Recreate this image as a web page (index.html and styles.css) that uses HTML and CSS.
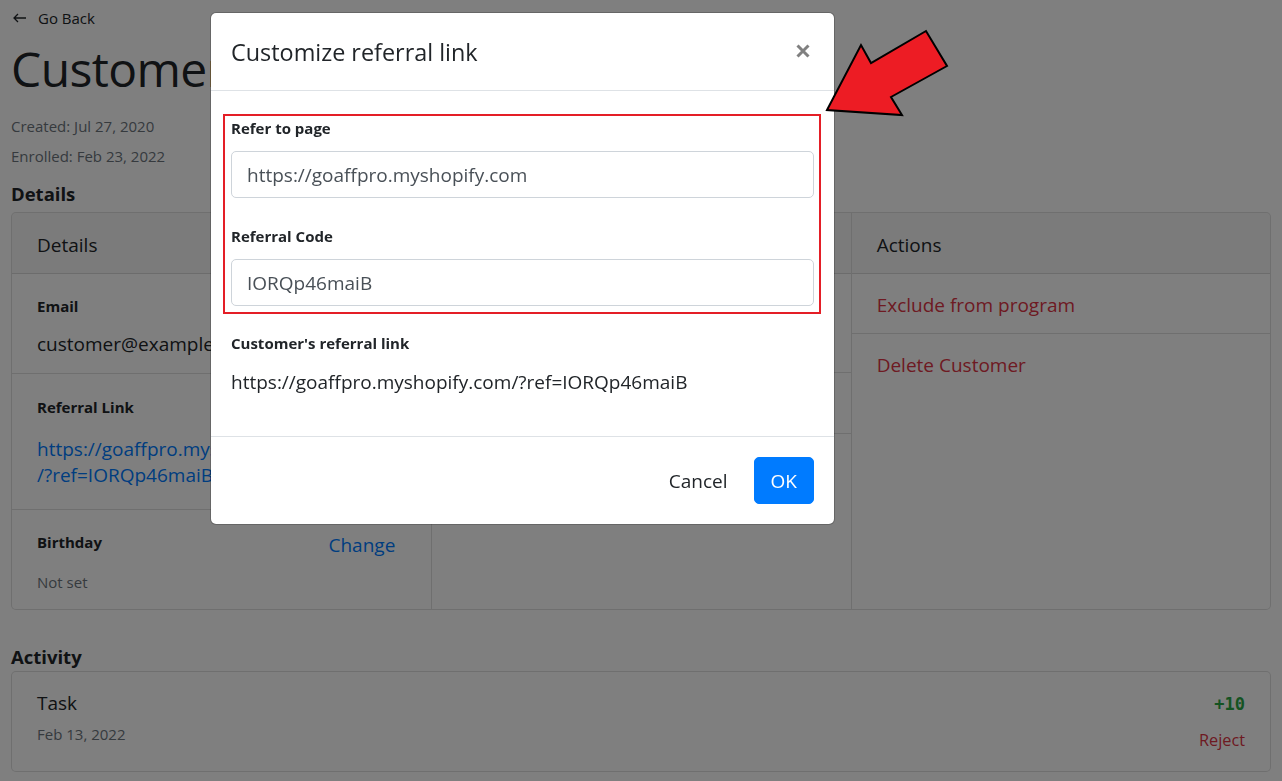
FILE: index.html
```html
<!DOCTYPE html>
<html lang="en">
<head>
<meta charset="utf-8">
<title>Customer</title>
<link rel="stylesheet" href="styles.css">
</head>
<body>
<div class="page">
  <a class="back" href="#">
    <svg class="back-icon" width="14" height="10" viewBox="0 0 14 10"><path d="M1 5 H13 M5 1 L1 5 L5 9" fill="none" stroke="#212529" stroke-width="1.3"/></svg>
    <span>Go Back</span>
  </a>
  <h1 class="title">Customer</h1>
  <div class="meta meta-first">Created: Jul 27, 2020</div>
  <div class="meta">Enrolled: Feb 23, 2022</div>

  <h2 class="section">Details</h2>
  <div class="card grid3">
    <div class="col">
      <div class="col-head">Details</div>
      <div class="item item-email">
        <div class="label">Email</div>
        <div class="value">customer@example.com</div>
      </div>
      <div class="item item-link">
        <div class="label">Referral Link</div>
        <a class="ref-link" href="#"><span class="nowrap">https://goaffpro.myshopify.com</span><wbr><span class="nowrap">/?ref=IORQp46maiB</span></a>
      </div>
      <div class="item item-birthday">
        <div class="row">
          <div class="label">Birthday</div>
          <a class="change" href="#">Change</a>
        </div>
        <div class="muted">Not set</div>
      </div>
    </div>
    <div class="col">
      <div class="col-head">&nbsp;</div>
      <div class="item item-blank"></div>
      <div class="item item-blank-short"></div>
    </div>
    <div class="col">
      <div class="col-head">Actions</div>
      <div class="item item-action">
        <a class="danger" href="#">Exclude from program</a>
      </div>
      <div class="item item-action item-last">
        <a class="danger" href="#">Delete Customer</a>
      </div>
    </div>
  </div>

  <h2 class="section section-activity">Activity</h2>
  <div class="card activity">
    <div class="act-left">
      <div class="act-title">Task</div>
      <div class="act-date">Feb 13, 2022</div>
    </div>
    <div class="act-right">
      <div class="points">+10</div>
      <a class="reject" href="#">Reject</a>
    </div>
  </div>
</div>

<div class="backdrop"></div>

<div class="modal">
  <div class="dialog">
    <div class="m-header">
      <h5 class="m-title">Customize referral link</h5>
      <svg class="m-close" width="14" height="14" viewBox="0 0 14 14"><path d="M1.5 1.5 L12.5 12.5 M12.5 1.5 L1.5 12.5" stroke="#808080" stroke-width="3"/></svg>
    </div>
    <div class="m-body">
      <div class="highlight">
        <div class="fgroup">
          <label class="flabel">Refer to page</label>
          <input class="finput" type="text" value="https://goaffpro.myshopify.com">
        </div>
        <div class="fgroup fgroup-last">
          <label class="flabel">Referral Code</label>
          <input class="finput" type="text" value="IORQp46maiB">
        </div>
      </div>
      <label class="flabel">Customer's referral link</label>
      <div class="final-link">https://goaffpro.myshopify.com/?ref=IORQp46maiB</div>
    </div>
    <div class="m-footer">
      <button class="btn btn-link">Cancel</button>
      <button class="btn btn-primary">OK</button>
    </div>
  </div>
</div>

<svg class="pointer" width="140" height="100" viewBox="815 22 140 100">
  <path d="M827 110 L861 45 L871 63 L926 31 L947 66 L891 97 L902 115 Z" fill="#ed1c24" stroke="#000" stroke-width="2" stroke-linejoin="miter"/>
</svg>
</body>
</html>
```

FILE: styles.css
```css
* { box-sizing: border-box; }
html, body { margin: 0; padding: 0; }
body {
  font-family: "Open Sans", "Noto Sans", sans-serif;
  font-size: 19px;
  line-height: 30px;
  color: #212529;
  background: #fff;
  overflow: hidden;
  height: 781px;
}
a { text-decoration: none; }
.nowrap { white-space: nowrap; }

.page { padding: 6px 11px 0; }

.back {
  display: flex;
  align-items: center;
  height: 24px;
  font-size: 15px;
  color: #212529;
}
.back-icon { margin-left: 2px; margin-right: 11px; }

.title {
  margin: 10px 0 0;
  font-size: 48px;
  line-height: 58px;
  font-weight: 400;
  letter-spacing: -0.6px;
}
.meta { font-size: 15px; line-height: 30px; color: #6c757d; }
.meta-first { margin-top: 13px; }

.section {
  margin: 8px 0 0;
  font-size: 18.5px;
  line-height: 30px;
  font-weight: 700;
}
.section-activity { margin-top: 33px; line-height: 28px; }

.card {
  border: 1px solid rgba(0,0,0,.125);
  border-radius: 5px;
  background: #fff;
}
.grid3 {
  margin-top: 3px;
  display: grid;
  grid-template-columns: 1fr 1fr 1fr;
  overflow: hidden;
}
.col + .col { border-left: 1px solid rgba(0,0,0,.125); }
.col-head {
  padding: 17px 25px 13px;
  line-height: 30px;
  background: rgba(0,0,0,.03);
  border-bottom: 1px solid rgba(0,0,0,.125);
}
.item { padding: 20px 25px 14px; border-bottom: 1px solid rgba(0,0,0,.125); }
.item-birthday, .item-last { border-bottom: 0; }
.item-blank { height: 99px; padding: 0; }
.item-blank-short { height: 61px; padding: 0; }
.label { font-weight: 700; font-size: 15px; line-height: 24px; }
.value { margin-top: 11px; line-height: 30px; }
.item-link { padding: 21px 25px 21px; }
.ref-link { display: block; margin-top: 17px; line-height: 26px; color: #007bff; }
.item-birthday { padding: 20px 25px 15px; }
.row { display: flex; justify-content: space-between; align-items: flex-start; }
.change { color: #007bff; line-height: 30px; margin-right: 11px; }
.muted { margin-top: 10px; font-size: 15px; line-height: 24px; color: #6c757d; }
.item-action { padding: 16px 25px 13px; }
.danger { color: #dc3545; }

.activity {
  display: flex;
  justify-content: space-between;
  padding: 16px 25px 16px;
}
.act-title { line-height: 30px; }
.act-date { margin-top: 4px; font-size: 15px; line-height: 24px; color: #6c757d; }
.act-right { padding-top: 1px; display: flex; flex-direction: column; align-items: flex-end; }
.points {
  font-family: "DejaVu Sans Mono", "Liberation Mono", monospace;
  font-weight: 700;
  font-size: 17px;
  line-height: 30px;
  color: #28a745;
}
.reject { margin-top: 6px; font-size: 16.3px; line-height: 30px; color: #dc3545; }

.backdrop { position: fixed; inset: 0; background: rgba(0,0,0,.5); }

.modal { position: fixed; inset: 0; }
.dialog {
  width: 625px;
  margin: 12px 0 0 210px;
  background: #fff;
  background-clip: padding-box;
  border: 1px solid rgba(0,0,0,.2);
  border-radius: 6px;
}
.m-header {
  display: flex;
  align-items: center;
  justify-content: space-between;
  padding: 20px 24px 19px 20px;
  border-bottom: 1px solid #dee2e6;
}
.m-title { margin: 0; font-size: 23.4px; line-height: 38px; font-weight: 400; }
.m-close { display: block; margin-bottom: 3px; }
.m-body { padding: 24px 20px 20px; }
.highlight {
  border: 2px solid #e41e26;
  margin: -1px -7px 17px -8px;
  padding: 0 5px 6px 6px;
}
.fgroup { margin-bottom: 26px; }
.fgroup-last { margin-bottom: 0; }
.flabel { display: block; font-weight: 700; font-size: 15px; line-height: 24px; margin-bottom: 10px; }
.highlight .flabel { margin-bottom: 11px; }
.finput {
  display: block;
  width: 100%;
  height: 47px;
  padding: 7px 15px;
  border: 1px solid #ced4da;
  border-radius: 5px;
  font-family: inherit;
  font-size: 19px;
  line-height: 30px;
  color: #495057;
  background: #fff;
  outline: none;
}
.final-link { margin-top: 12px; margin-bottom: 19px; line-height: 30px; }
.m-footer {
  display: flex;
  justify-content: flex-end;
  align-items: center;
  gap: 10px;
  padding: 20px;
  border-top: 1px solid #dee2e6;
}
.btn {
  font-family: inherit;
  font-size: 19px;
  line-height: 30px;
  height: 47px;
  padding: 7px 15px;
  border: 1px solid transparent;
  border-radius: 5px;
  cursor: pointer;
}
.btn-link { background: transparent; color: #212529; }
.btn-primary { background: #007bff; border-color: #007bff; color: #fff; padding: 7px 16px; }

.pointer { position: fixed; left: 815px; top: 22px; }
```
